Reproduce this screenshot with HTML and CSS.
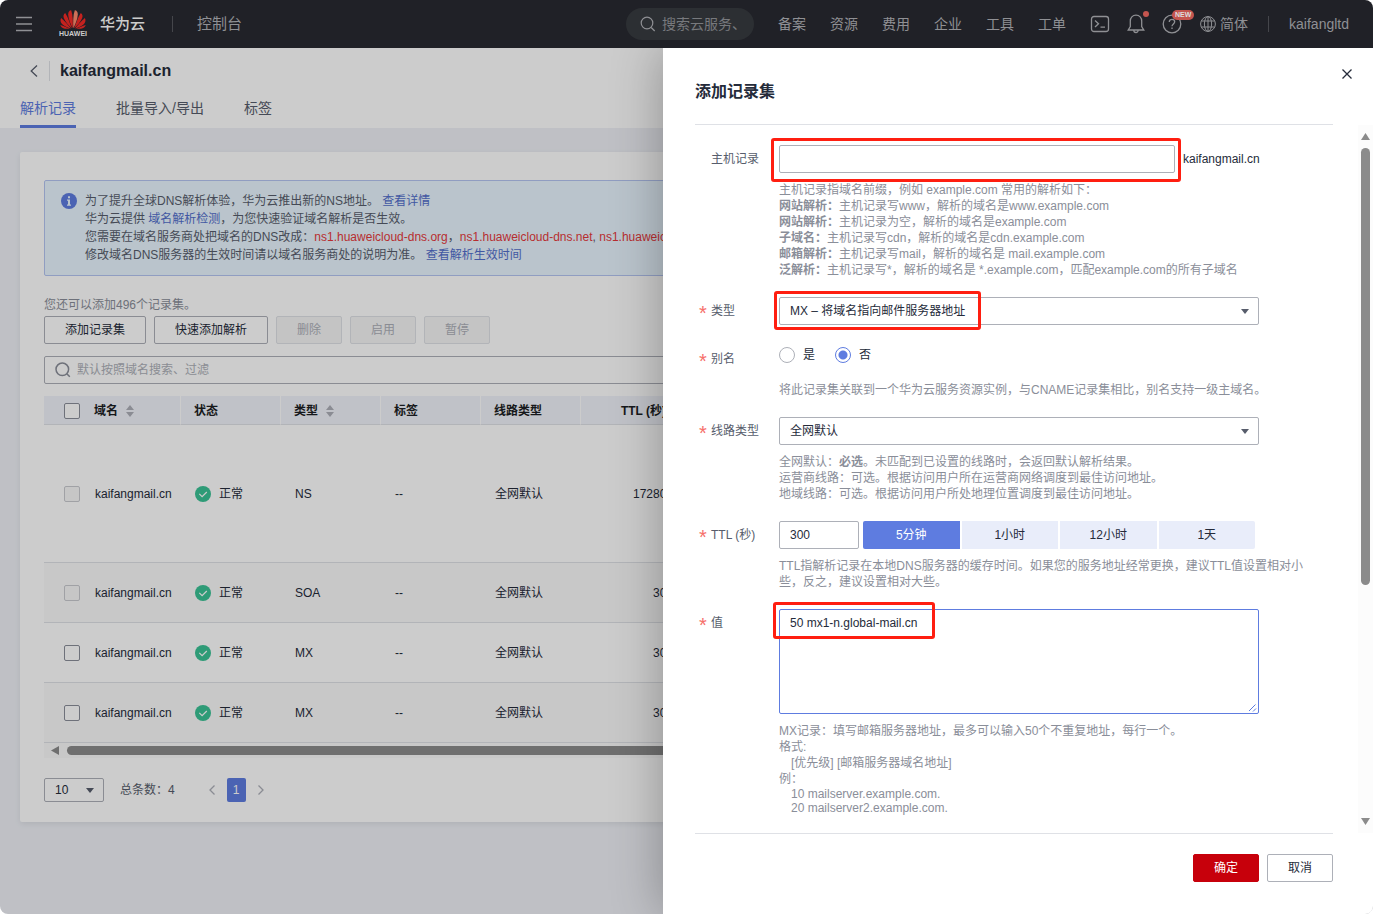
FILE: index.html
```html
<!DOCTYPE html>
<html lang="zh-CN">
<head>
<meta charset="utf-8">
<title>kaifangmail.cn - 解析记录</title>
<link rel="stylesheet" href="styles.css">
</head>
<body>
<div class="app">
  <header class="topbar">
    <button class="icon-btn menu" aria-label="菜单">
      <svg width="16" height="16" viewBox="0 0 16 16" fill="none" stroke="currentColor" stroke-width="1.3"><path d="M0 1.5h16M0 8h16M0 14.5h16"/></svg>
    </button>
    <div class="logo">
      <svg width="26" height="19" viewBox="0 0 26 19" fill="#c5221f">
        <path d="M12.7 18.300C12.900 12 13 5 11.200.2 9.400.4 8.100 1.700 8.200 4.400 8.400 9.200 10.700 14.500 12.700 18.300z"/>
        <path fill="#cf7058" d="M13.300 18.300C13.100 12 13 5 14.800.2 16.600.4 17.900 1.700 17.800 4.400 17.600 9.200 15.300 14.500 13.300 18.300z"/>
        <path d="M11.900 18.300C9.800 13 8.200 7.500 5.200 2.900 3.500 4 3 6 3.900 8.300 5.200 11.700 8.500 15.500 11.900 18.300z"/>
        <path d="M14.100 18.300C16.200 13 17.800 7.500 20.800 2.900 22.500 4 23 6 22.100 8.300 20.800 11.700 17.500 15.500 14.100 18.300z"/>
        <path d="M11 18.400C7.500 14.500 4.500 10.600 1.100 8 .1 10 .3 12.200 2 13.900 4.200 16 7.700 17.600 11 18.400z"/>
        <path d="M15 18.400C18.500 14.500 21.500 10.600 24.900 8 25.900 10 25.700 12.200 24 13.900 21.800 16 18.300 17.600 15 18.400z"/>
        <path d="M10 18.800C6.500 17.400 3.500 15.900.3 15.100.9 17.200 2.600 18.500 5 18.700z"/>
        <path d="M16 18.800C19.500 17.400 22.500 15.900 25.700 15.100 25.100 17.200 23.400 18.500 21 18.700z"/>
      </svg>
      <span>HUAWEI</span>
    </div>
    <strong class="brand">华为云</strong>
    <span class="divider"></span>
    <a class="console" href="#">控制台</a>
    <label class="search">
      <svg width="16" height="16" viewBox="0 0 16 16" fill="none" stroke="currentColor" stroke-width="1.200"><circle cx="7" cy="7" r="5.800"/><path d="M11.200 11.500l3.500 3.500"/></svg>
      <input type="text" placeholder="搜索云服务、" aria-label="搜索">
    </label>
    <nav class="links">
      <a href="#">备案</a><a href="#">资源</a><a href="#">费用</a><a href="#">企业</a><a href="#">工具</a><a href="#">工单</a>
    </nav>
    <div class="tools">
      <button class="icon-btn" aria-label="终端"><svg width="20" height="20" viewBox="0 0 20 20" fill="none" stroke="currentColor" stroke-width="1.300"><rect x="1.500" y="2.500" width="17" height="15" rx="2.500"/><path d="M5 6.500l3.500 3.200L5 13M10.500 13.200h4.500"/></svg></button>
      <button class="icon-btn" aria-label="通知"><svg width="20" height="20" viewBox="0 0 20 20" fill="none" stroke="currentColor" stroke-width="1.300"><path d="M10 1.200c-3.500 0-5.700 2.500-5.700 5.800v5.500L2.200 16h15.600l-2.100-3.500V7c0-3.300-2.200-5.800-5.700-5.800zM7.800 16.300a2.200 2.200 0 0 0 4.400 0"/></svg><i class="dot"></i></button>
      <button class="icon-btn" aria-label="帮助"><svg width="20" height="20" viewBox="0 0 20 20" fill="none" stroke="currentColor" stroke-width="1.300"><circle cx="10" cy="10" r="8.800"/><path d="M7.300 8c0-1.600 1.100-2.700 2.700-2.700s2.700 1 2.700 2.500c0 2-2.700 2.200-2.700 4.400M10 13.500v1.500"/></svg><span class="new">NEW</span></button>
    </div>
    <button class="lang"><svg width="16" height="16" viewBox="0 0 16 16" fill="none" stroke="currentColor"><circle cx="8" cy="8" r="7.400"/><ellipse cx="8" cy="8" rx="3.600" ry="7.400"/><path d="M8 .6v14.800M1.300 5h13.400M1.300 11h13.400"/></svg>简体</button>
    <span class="divider"></span>
    <a class="user" href="#">kaifangltd</a>
  </header>

  <div class="stage">
    <main class="page">
      <div class="page-head">
        <div class="crumb">
          <button class="icon-btn" aria-label="返回"><svg width="8" height="12" viewBox="0 0 8 12" fill="none" stroke="currentColor" stroke-width="1.300"><path d="M7 .5L1.200 6 7 11.500"/></svg></button>
          <h1>kaifangmail.cn</h1>
        </div>
        <nav class="tabs">
          <a class="active" href="#">解析记录</a><a href="#">批量导入/导出</a><a href="#">标签</a>
        </nav>
      </div>
      <section class="card">
        <div class="alert">
          <svg width="16" height="16" viewBox="0 0 16 16"><circle cx="8" cy="8" r="8" fill="#5e7ce0"/><path d="M7 3.200h2v2H7zM6 6.500h3v5h1v1.200H6v-1.200h1V7.700H6z" fill="#e9f6ff"/></svg>
          <div>
            <p>为了提升全球DNS解析体验，华为云推出新的NS地址。 <a href="#">查看详情</a></p>
            <p>华为云提供 <a href="#">域名解析检测</a>，为您快速验证域名解析是否生效。</p>
            <p>您需要在域名服务商处把域名的DNS改成：<span class="ns">ns1.huaweicloud-dns.org</span>，<span class="ns">ns1.huaweicloud-dns.net</span>, <span class="ns">ns1.huaweicloud-dns.cn</span></p>
            <p>修改域名DNS服务器的生效时间请以域名服务商处的说明为准。 <a href="#">查看解析生效时间</a></p>
          </div>
        </div>
        <p class="quota">您还可以添加496个记录集。</p>
        <div class="actions">
          <button class="btn">添加记录集</button><button class="btn">快速添加解析</button><button class="btn" disabled>删除</button><button class="btn" disabled>启用</button><button class="btn" disabled>暂停</button>
        </div>
        <label class="filter">
          <svg width="16" height="16" viewBox="0 0 16 16" fill="none" stroke="#8a8e99" stroke-width="1.500"><circle cx="7.300" cy="7.300" r="6.300"/><path d="M11.800 11.800l3 3"/></svg>
          <input type="text" placeholder="默认按照域名搜索、过滤" aria-label="过滤">
        </label>
        <table class="records">
          <colgroup><col class="c-name"><col class="c-std"><col class="c-std"><col class="c-std"><col class="c-std"><col class="c-ttl"><col></colgroup>
          <thead>
            <tr>
              <th><span class="cell"><input type="checkbox" aria-label="全选">域名<svg class="sort" width="8" height="12" viewBox="0 0 8 12"><path d="M4 0l4 5H0zM4 12l4-5H0z"/></svg></span></th>
              <th>状态</th>
              <th><span class="cell">类型<svg class="sort" width="8" height="12" viewBox="0 0 8 12"><path d="M4 0l4 5H0zM4 12l4-5H0z"/></svg></span></th>
              <th>标签</th><th>线路类型</th><th class="num">TTL (秒)</th><th></th>
            </tr>
          </thead>
          <tbody>
            <tr class="tall"><td><span class="cell"><input type="checkbox" aria-label="NS" disabled>kaifangmail.cn</span></td><td><span class="cell ok"><svg width="16" height="16" viewBox="0 0 16 16"><circle cx="8" cy="8" r="8" fill="#3ac295"/><path d="M4.300 7.800l2.800 2.800 4.700-4.600" fill="none" stroke="#fff" stroke-width="1.200"/></svg>正常</span></td><td>NS</td><td>--</td><td>全网默认</td><td class="num">172800</td><td></td></tr>
            <tr><td><span class="cell"><input type="checkbox" aria-label="SOA" disabled>kaifangmail.cn</span></td><td><span class="cell ok"><svg width="16" height="16" viewBox="0 0 16 16"><circle cx="8" cy="8" r="8" fill="#3ac295"/><path d="M4.300 7.800l2.800 2.800 4.700-4.600" fill="none" stroke="#fff" stroke-width="1.200"/></svg>正常</span></td><td>SOA</td><td>--</td><td>全网默认</td><td class="num">300</td><td></td></tr>
            <tr><td><span class="cell"><input type="checkbox" aria-label="MX 1">kaifangmail.cn</span></td><td><span class="cell ok"><svg width="16" height="16" viewBox="0 0 16 16"><circle cx="8" cy="8" r="8" fill="#3ac295"/><path d="M4.300 7.800l2.800 2.800 4.700-4.600" fill="none" stroke="#fff" stroke-width="1.200"/></svg>正常</span></td><td>MX</td><td>--</td><td>全网默认</td><td class="num">300</td><td></td></tr>
            <tr><td><span class="cell"><input type="checkbox" aria-label="MX 2">kaifangmail.cn</span></td><td><span class="cell ok"><svg width="16" height="16" viewBox="0 0 16 16"><circle cx="8" cy="8" r="8" fill="#3ac295"/><path d="M4.300 7.800l2.800 2.800 4.700-4.600" fill="none" stroke="#fff" stroke-width="1.200"/></svg>正常</span></td><td>MX</td><td>--</td><td>全网默认</td><td class="num">300</td><td></td></tr>
          </tbody>
        </table>
        <div class="hscroll"><svg width="8" height="9" viewBox="0 0 8 9"><path d="M8 0v9L0 4.500z" fill="#8b8b8b"/></svg><span></span></div>
        <div class="pager">
          <span class="select small"><select aria-label="每页条数"><option>10</option></select><svg width="8" height="5" viewBox="0 0 8 5"><path d="M0 0h8L4 5z"/></svg></span>
          <span class="total">总条数：4</span>
          <button class="icon-btn" aria-label="上一页"><svg width="6" height="10" viewBox="0 0 6 10" fill="none" stroke="currentColor" stroke-width="1.300"><path d="M5.500.5L1 5l4.500 4.500"/></svg></button>
          <button class="current">1</button>
          <button class="icon-btn" aria-label="下一页"><svg width="6" height="10" viewBox="0 0 6 10" fill="none" stroke="currentColor" stroke-width="1.300"><path d="M.5.500L5 5 .5 9.500"/></svg></button>
        </div>
      </section>
    </main>
    <div class="scrim"></div>

    <aside class="drawer">
      <button class="icon-btn close" aria-label="关闭"><svg width="10" height="10" viewBox="0 0 10 10" fill="none" stroke="currentColor" stroke-width="1.300"><path d="M.5.500l9 9M9.500.500l-9 9"/></svg></button>
      <h2>添加记录集</h2>
      <div class="drawer-body">
        <form class="form" id="record">
          <div class="row">
            <label class="name" for="host">主机记录</label>
            <div>
              <div class="control"><input class="field host" id="host" type="text"><span>kaifangmail.cn</span><i class="mark mark-host"></i></div>
              <div class="help">
                <p>主机记录指域名前缀，例如 example.com 常用的解析如下：</p>
                <p><b>网站解析：</b>主机记录写www，解析的域名是www.example.com</p>
                <p><b>网站解析：</b>主机记录为空，解析的域名是example.com</p>
                <p><b>子域名：</b>主机记录写cdn，解析的域名是cdn.example.com</p>
                <p><b>邮箱解析：</b>主机记录写mail，解析的域名是 mail.example.com</p>
                <p><b>泛解析：</b>主机记录写*，解析的域名是 *.example.com，匹配example.com的所有子域名</p>
              </div>
            </div>
          </div>
          <div class="row">
            <label class="name required" for="type">类型</label>
            <div class="control alone"><span class="select"><select id="type"><option>MX – 将域名指向邮件服务器地址</option></select><svg width="8" height="5" viewBox="0 0 8 5"><path d="M0 0h8L4 5z"/></svg></span><i class="mark mark-type"></i></div>
          </div>
          <div class="row">
            <span class="name required">别名</span>
            <div>
              <div class="control radios"><label><input type="radio" name="alias">是</label><label><input type="radio" name="alias" checked>否</label></div>
              <div class="help"><p>将此记录集关联到一个华为云服务资源实例，与CNAME记录集相比，别名支持一级主域名。</p></div>
            </div>
          </div>
          <div class="row">
            <label class="name required" for="line">线路类型</label>
            <div>
              <div class="control"><span class="select"><select id="line"><option>全网默认</option></select><svg width="8" height="5" viewBox="0 0 8 5"><path d="M0 0h8L4 5z"/></svg></span></div>
              <div class="help">
                <p>全网默认：<b>必选</b>。未匹配到已设置的线路时，会返回默认解析结果。</p>
                <p>运营商线路：可选。根据访问用户所在运营商网络调度到最佳访问地址。</p>
                <p>地域线路：可选。根据访问用户所处地理位置调度到最佳访问地址。</p>
              </div>
            </div>
          </div>
          <div class="row">
            <label class="name required" for="ttl">TTL (秒)</label>
            <div>
              <div class="control ttl"><input class="field" id="ttl" type="text" value="300"><div class="segments"><button type="button" class="on">5分钟</button><button type="button">1小时</button><button type="button">12小时</button><button type="button">1天</button></div></div>
              <div class="help"><p>TTL指解析记录在本地DNS服务器的缓存时间。如果您的服务地址经常更换，建议TTL值设置相对小些，反之，建议设置相对大些。</p></div>
            </div>
          </div>
          <div class="row">
            <label class="name required" for="value">值</label>
            <div>
              <div class="control"><textarea class="field" id="value" rows="4">50 mx1-n.global-mail.cn</textarea><svg class="grip" width="8" height="8" viewBox="0 0 8 8" stroke="#5e7ce0" fill="none"><path d="M0 7L6.500.5M4 7.500l3-3"/></svg><i class="mark mark-value"></i></div>
              <div class="help">
                <p>MX记录：填写邮箱服务器地址，最多可以输入50个不重复地址，每行一个。</p>
                <p>格式:</p>
                <p class="indent">[优先级] [邮箱服务器域名地址]</p>
                <p>例：</p>
                <p class="indent code">10 mailserver.example.com.</p>
                <p class="indent code">20 mailserver2.example.com.</p>
              </div>
            </div>
          </div>
        </form>
        <div class="vscroll">
          <svg width="9" height="7" viewBox="0 0 9 7"><path d="M4.500 0L9 7H0z" fill="#8b8b8b"/></svg>
          <div class="track"><span></span></div>
          <svg width="9" height="7" viewBox="0 0 9 7"><path d="M4.500 7L9 0H0z" fill="#8b8b8b"/></svg>
        </div>
      </div>
      <footer><button class="btn primary" form="record" type="button">确定</button><button class="btn">取消</button></footer>
    </aside>
  </div>
</div>
</body>
</html>
```
FILE: styles.css
```css
* { box-sizing: border-box; }
body { margin: 0; background: #fff; color: #252b3a; font: 12px/16px "Liberation Sans", "Noto Sans CJK SC", sans-serif; }
h1, h2, p { margin: 0; }
a { color: inherit; text-decoration: none; }
button, input, select, textarea { font: inherit; color: inherit; margin: 0; }
button { border: 0; padding: 0; background: none; white-space: nowrap; }
svg { display: block; flex: none; }
.icon-btn { display: flex; position: relative; flex: none; }

.app { display: flex; flex-direction: column; min-height: 100vh; border-radius: 8px; overflow: hidden; }

/* Top bar */
.topbar { display: flex; align-items: center; height: 48px; padding: 0 24px 0 16px; background: #202127; color: #8f9094; font-size: 14px; line-height: 20px; white-space: nowrap; position: relative; z-index: 2; }
.logo { display: flex; flex-direction: column; align-items: center; gap: 1px; margin: 0 13px 0 27px; color: #ccc; font-size: 7px; line-height: 8px; font-weight: bold; width: 28px; }
.brand { color: #ccc; font-size: 15px; font-weight: 500; margin-right: 27px; }
.divider { width: 1px; height: 16px; background: #45464b; }
.console { font-size: 15px; margin-left: 24px; }
.search { display: flex; align-items: center; gap: 6px; width: 128px; height: 32px; margin-left: auto; padding: 0 14px; border-radius: 16px; background: #2c2f33; }
.search input { flex: 1; min-width: 0; border: 0; padding: 0; background: none; outline: 0; }
.search input::placeholder { color: #77797d; opacity: 1; }
.links { display: flex; gap: 24px; margin: 0 24px; }
.tools { display: flex; gap: 16px; margin-right: 18px; }
.dot { position: absolute; top: -3px; right: -3px; width: 6px; height: 6px; border-radius: 50%; background: #c4554f; }
.new { position: absolute; top: -4px; left: 10px; padding: 0 3px; border-radius: 5px; background: #c4554f; color: #ddd; font-size: 7px; line-height: 10px; font-weight: bold; }
.lang { display: flex; align-items: center; gap: 4px; margin-right: 20px; }
.user { margin-left: 20px; }

/* Page */
.stage { position: relative; flex: 1; display: flex; overflow: hidden; }
.page { flex: 1; min-width: 0; background: #eff1f7; padding-bottom: 40px; }
.scrim { position: absolute; inset: 0; background: rgba(0, 0, 0, .2); }
.page-head { background: #fff; height: 80px; display: flex; flex-direction: column; justify-content: space-between; padding: 13px 20px 0; }
.crumb { display: flex; align-items: center; padding-left: 10px; color: #575d6c; }
.crumb h1 { margin-left: 11px; padding-left: 10px; border-left: 1px solid #dfe1e6; font-size: 16px; line-height: 20px; color: #252b3a; }
.tabs { display: flex; gap: 40px; font-size: 14px; line-height: 20px; color: #575d6c; }
.tabs a { padding: 0 0 7px; border-bottom: 3px solid transparent; }
.tabs .active { color: #5e7ce0; border-color: #5e7ce0; }
.card { margin: 24px 20px 0; padding: 28px 24px 20px; background: #fff; border-radius: 2px; box-shadow: 0 2px 6px rgba(0, 0, 0, .08); }
.alert { display: flex; gap: 8px; padding: 11px 16px; min-height: 96px; border: 1px solid #b5c5f2; border-radius: 2px; background: #e9f6ff; color: #575d6c; line-height: 18px; white-space: nowrap; overflow: hidden; }
.alert > svg { margin-top: 1px; }
.alert a { color: #526ecc; }
.ns { color: #e5393c; }
.quota { margin: 21px 0 3px; color: #8a8e99; }
.btn { min-width: 66px; height: 28px; padding: 0 20px; border: 1px solid #adb0b8; border-radius: 2px; background: #fff; color: #252b3a; }
.btn:disabled { background: #f5f5f6; border-color: #dfe1e6; color: #adb0b8; }
.primary { background: #c7000b; border-color: #c7000b; color: #fff; }
.actions { display: flex; gap: 8px; }
.filter { display: flex; align-items: center; gap: 6px; height: 28px; margin: 12px 0; padding: 0 10px; border: 1px solid #adb0b8; border-radius: 2px; }
.filter input { flex: 1; border: 0; padding: 0; background: none; outline: 0; }
.filter input::placeholder { color: #adb0b8; opacity: 1; }

.records { width: 100%; table-layout: fixed; border-collapse: separate; border-spacing: 0; }
.c-name { width: 137px; }
.c-std { width: 100px; }
.c-ttl { width: 113px; }
.records th, .records td { height: 60px; padding: 0 0 0 14px; text-align: left; border-bottom: 1px solid #dfe1e6; white-space: nowrap; }
.records th { height: 29px; padding: 1px 0 0 13px; background: #f0f3fa; color: #1c1e24; border-right: 1px solid #fff; }
.records th:first-child, .records td:first-child { padding-left: 20px; }
.records .tall td { height: 138px; }
.records tbody tr:nth-child(even) { background: #fafafb; }
.records .num { text-align: right; padding-right: 21px; }
.records th.num { padding-right: 27px; }
.cell { display: flex; align-items: center; gap: 8px; }
.cell input { margin-right: 7px; }
th .cell input { margin-right: 6px; }
.sort { fill: #adb0b8; }
input[type="checkbox"] { appearance: none; width: 16px; height: 16px; border: 1px solid #8a8e99; border-radius: 2px; background: #fff; flex: none; }
input[type="checkbox"]:disabled { border-color: #c8cacf; background: #f8f8f8; }
.hscroll { display: flex; align-items: center; gap: 8px; height: 15px; padding: 0 7px; background: #fafafa; }
.hscroll span { flex: 1; height: 9px; border-radius: 5px; background: #8b8b8b; }
.pager { display: flex; align-items: center; margin-top: 20px; color: #575d6c; }
.pager .icon-btn { color: #adb0b8; }
.total { margin: 0 34px 0 16px; }
.current { width: 19px; height: 24px; margin: 0 12px; border-radius: 2px; background: #5e7ce0; color: #fff; }

.select { position: relative; display: block; width: 480px; }
.select select { appearance: none; display: block; width: 100%; height: 28px; padding: 0 10px; border: 1px solid #adb0b8; border-radius: 2px; background: #fff; color: #252b3a; }
.select svg { position: absolute; right: 10px; top: 12px; fill: #575d6c; }
.select.small { width: 60px; }
.small select { height: 24px; }
.small svg { top: 10px; }

/* Drawer */
.drawer { position: absolute; top: 0; right: 0; bottom: 0; width: 710px; display: flex; flex-direction: column; background: #fff; box-shadow: 0 0 48px rgba(0, 0, 0, .3); }
.close { position: absolute; top: 21px; right: 21px; color: #252b3a; }
.drawer h2 { margin: 0 40px 0 32px; padding: 34px 0 22px; border-bottom: 1px solid #dfe1e6; font-size: 16px; line-height: 20px; }
.drawer-body { flex: 1; min-height: 0; display: flex; overflow: hidden; }
.form { flex: 1; display: flex; flex-direction: column; gap: 19px; padding: 20px 20px 0 32px; }
.row { display: grid; grid-template-columns: 84px 1fr; }
.name { position: relative; padding-left: 16px; line-height: 28px; color: #575d6c; }
.required::before { content: "*"; position: absolute; left: 4px; top: 2px; color: #f66f6a; font-size: 20px; }
.control { position: relative; display: flex; gap: 8px; align-items: center; min-height: 28px; width: 480px; }
.alone { margin-bottom: 1px; }
.field { border: 1px solid #adb0b8; border-radius: 2px; padding: 0 10px; height: 28px; outline: 0; background: #fff; }
.host { flex: none; width: 396px; }
.help { margin-top: 9px; max-width: 530px; color: #8a8e99; }
.indent { padding-left: 12px; }
.code { line-height: 14px; }
.radios { align-items: flex-start; gap: 20px; }
.radios label { display: flex; align-items: center; gap: 8px; line-height: 20px; }
.radios input { appearance: none; width: 16px; height: 16px; border: 1px solid #adb0b8; border-radius: 50%; background: #fff; }
.radios input:checked { border-color: #5e7ce0; background: radial-gradient(circle, #5e7ce0 4px, #fff 5px); }
.ttl { gap: 4px; }
.ttl .field { width: 80px; }
.segments { flex: none; width: 392px; display: grid; grid-template-columns: repeat(4, 1fr); gap: 2px; border-radius: 2px; overflow: hidden; }
.segments button { height: 28px; background: #e9edfa; }
.segments .on { background: #5e7ce0; color: #fff; }
textarea.field { display: block; width: 480px; height: 105px; padding: 5px 10px; border-color: #5e7ce0; resize: none; }
.grip { position: absolute; right: 2px; bottom: 2px; }
.mark { position: absolute; border: 3px solid #ff1e10; border-radius: 3px; pointer-events: none; }
.mark-host { left: -8px; top: -7px; width: 410px; height: 44px; }
.mark-type { left: -5px; top: -6px; width: 207px; height: 39px; }
.mark-value { left: -6px; top: -7px; width: 162px; height: 37px; }
.vscroll { display: flex; flex-direction: column; align-items: center; gap: 8px; width: 15px; padding: 8px 0; background: #fcfcfc; }
.track { flex: 1; width: 9px; }
.track span { display: block; height: 66%; border-radius: 5px; background: #8b8b8b; }
.drawer footer { display: flex; justify-content: flex-end; gap: 8px; margin: 0 40px 0 32px; padding: 20px 0 32px; border-top: 1px solid #dfe1e6; }
```
